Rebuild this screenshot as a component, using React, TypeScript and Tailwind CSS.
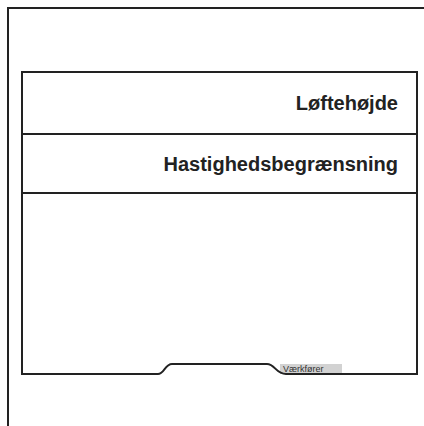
export default function App() {
  return (
    <div className="w-[424px] h-[426px] overflow-hidden bg-white" style={{ fontFamily: '"Liberation Sans", Arial, sans-serif' }}>
      <div className="ml-[7px] mt-[7px] w-[440px] h-[440px] border-l-2 border-t-2 border-[#222] pl-[12px] pt-[62px]">
        <div className="w-[397px] border-l-2 border-r-2 border-t-2 border-[#222] flex flex-col">
          <div className="h-[62px] border-b-2 border-[#222] flex items-center justify-end pr-[18px]">
            <span className="text-[20px] font-bold text-[#222] leading-none">Løftehøjde</span>
          </div>
          <div className="h-[59px] border-b-2 border-[#222] flex items-center justify-end pr-[18px]">
            <span className="text-[20px] font-bold text-[#222] leading-none">Hastighedsbegrænsning</span>
          </div>
          <div className="h-[181px] flex flex-col">
            <div className="flex-1" />
            <svg width="393" height="13" viewBox="0 0 393 13" className="block">
              <rect x="257" y="2" width="62" height="10" fill="#d2d2d2" />
              <text x="260" y="10" fontSize="9" fill="#333" fontFamily='"Liberation Sans", Arial, sans-serif'>Værkfører</text>
              <path d="M0 12 L135 12 C141 12 142 2 149 2 L244 2 C252 2 253 12 263 12 L393 12" fill="none" stroke="#222" strokeWidth="2" />
            </svg>
          </div>
        </div>
      </div>
    </div>
  );
}
